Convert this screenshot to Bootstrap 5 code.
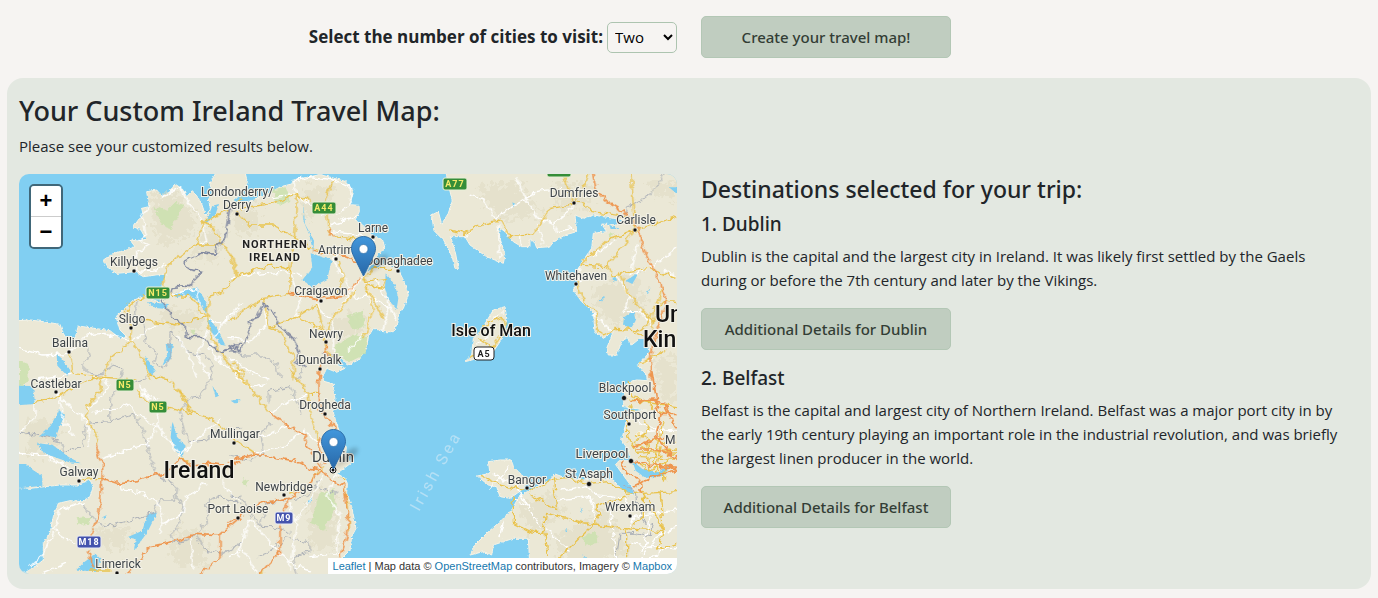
<!DOCTYPE html>
<html lang="en">
<head>
<meta charset="utf-8">
<meta name="viewport" content="width=device-width, initial-scale=1">
<title>Ireland Travel Map</title>
<link href="https://cdn.jsdelivr.net/npm/bootstrap@5.3.0/dist/css/bootstrap.min.css" rel="stylesheet">
<style>
  body { background: #f6f4f2; color: #212529; font-family: "Open Sans", "Noto Sans", sans-serif; font-size: 15px; line-height: 24px; }
  .city-label { font-size: 17px; font-weight: 700; }
  .city-select { width: 70px; height: 31px; padding: 0 3px; border: 1px solid #adc4b0; border-radius: 5px; background: transparent; color: #000; }
  .btn-sage { width: 250px; height: 42px; padding: 0; font-family: "Noto Sans", sans-serif; font-size: 15px; font-weight: 500; color: #333d35; background: #c0cdc0; border: 1px solid #b3c7b5; border-radius: 5px; }
  .btn-sage:hover { background: #b3c7b5; }
  .results { margin: 20px 7px 0; padding: 16px 12px 15px; border-radius: 16px; background: #e3e8e1; }
  .results h1, .results h2, .results h3 { font-family: "Noto Sans", sans-serif; font-weight: 500; }
  .results h1 { margin-bottom: 6px; font-size: 27px; line-height: 34px; }
  .results h2 { font-size: 23px; line-height: 30px; }
  .results h3 { font-size: 19px; line-height: 24px; }
  .travel-map { height: 400px; border-radius: 10px; background: #81cff2; }
  .map-zoom { top: 10px; left: 10px; width: 34px; border: 2px solid rgba(0,0,0,.5); border-radius: 5px; background-clip: padding-box; }
  .map-zoom button { height: 30px; padding: 0; border: 0; background: #fff; color: #000; font: bold 22px/30px "Liberation Sans", sans-serif; }
  .map-zoom button:first-child { height: 31px; border-bottom: 1px solid #ccc; }
  .map-credit { right: 0; bottom: 0; padding: 0 5px; font: 11px/16px "Liberation Sans", sans-serif; color: #333; background: #fff; }
  .map-credit a { color: #1678ae; text-decoration: none; }
  .land { fill: #ebe8d6; stroke: #f6f3e6; stroke-width: 3; }
  .water { fill: #81cff2; }
  .hill { fill: #dddabf; opacity: .45; }
  .wood { fill: #cbe2ae; opacity: .85; }
  .roads path { fill: none; stroke-linejoin: round; stroke-linecap: round; }
  .roads .w { stroke: #fff; stroke-width: 4; }
  .roads .y { stroke: #e9c34d; stroke-width: 4; }
  .roads .o { stroke: #ee9650; stroke-width: 5; }
  .roads .c { stroke: #a9aeb6; stroke-width: 3; }
  .roads .b { stroke: #8289a0; stroke-width: 5; }
  .places { font: 12px Roboto, sans-serif; fill: #3d4348; stroke: #f4f2e8; stroke-width: 2px; paint-order: stroke; text-anchor: middle; }
  .places .town { font-size: 13px; }
  .places .big { font-size: 15px; }
  .places .region { font-size: 11px; font-weight: 700; letter-spacing: 1px; fill: #222; }
  .places .isle { font-size: 16px; font-weight: 500; fill: #111; }
  .places .nation { font-size: 23px; font-weight: 500; fill: #111; }
  .places .from-left { text-anchor: start; }
  .shields { font: 700 9px Roboto, sans-serif; text-anchor: middle; letter-spacing: 1px; }
</style>
</head>
<body>
<form class="row mx-2 my-0 pt-3 align-items-center" style="--bs-gutter-x:24px">
  <div class="col-6 d-flex justify-content-end align-items-center gap-1">
    <label class="city-label" for="cities">Select the number of cities to visit:</label>
    <select class="city-select" id="cities"><option>One</option><option selected>Two</option><option>Three</option></select>
  </div>
  <div class="col-6"><button type="button" class="btn btn-sage">Create your travel map!</button></div>
</form>

<main class="results">
  <h1>Your Custom Ireland Travel Map:</h1>
  <p class="mb-3">Please see your customized results below.</p>
  <div class="row">
    <div class="col-6">
      <div class="travel-map position-relative overflow-hidden">
        <svg class="d-block w-100 h-100" viewBox="0 0 658 400" preserveAspectRatio="xMidYMid slice" role="img" aria-label="Map of Ireland and the Irish Sea">
          <defs>
            <filter id="rough" x="-5%" y="-5%" width="110%" height="110%"><feTurbulence type="fractalNoise" baseFrequency=".12" numOctaves="3" seed="4"/><feDisplacementMap in="SourceGraphic" scale="9" xChannelSelector="R" yChannelSelector="G"/></filter>
            <filter id="wander" x="-5%" y="-5%" width="110%" height="110%"><feTurbulence type="fractalNoise" baseFrequency=".05" numOctaves="2" seed="7" result="n"/><feDisplacementMap in="SourceGraphic" in2="n" scale="24" xChannelSelector="R" yChannelSelector="G"/></filter>
            <filter id="relief" x="0" y="0" width="100%" height="100%"><feTurbulence type="fractalNoise" baseFrequency=".06" numOctaves="3" seed="9" result="n"/><feDisplacementMap in="SourceGraphic" in2="n" scale="90" xChannelSelector="R" yChannelSelector="G"/></filter>
            <filter id="soft" x="-50%" y="-50%" width="200%" height="200%"><feGaussianBlur stdDeviation="2"/></filter>
            <linearGradient id="pinFill" x1="0" y1="0" x2="0" y2="1"><stop offset="0" stop-color="#4197dc"/><stop offset="1" stop-color="#2868a8"/></linearGradient>
            <g id="pin">
              <path d="M12 40 28 21q9-5 9 0-3 8-14 13z" fill="#000" opacity=".2" filter="url(#soft)"/>
              <path d="M12.500.5C5.800.5.5 6 .5 12.600c0 2.900 1 5.200 2.400 8.100L12.500 40l9.600-19.300c1.400-2.900 2.400-5.200 2.400-8.100C24.500 6 19.200.5 12.500.5z" fill="url(#pinFill)" stroke="#2e6ea8"/>
              <circle cx="12.500" cy="13" r="4.500" fill="#fff" stroke="#2f6ea6" stroke-width=".7"/>
            </g>
          </defs>

          <svg width="658" height="400" viewBox="0 0 1974 1200">
            <!-- coastlines -->
            <g filter="url(#rough)">
              <path class="land" d="M-20 441 33 438 73 443 123 451 131 475 142 493 168 493 178 456 213 461 273 470 303 493 325 490 303 468 291 428 318 403 343 378 378 368 423 385 430 330 443 300 410 303 373 308 348 293 293 298 263 278 253 258 283 238 323 228 348 218 333 198 358 201 381 196 366 168 343 158 358 138 373 123 368 103 390 98 383 53 413 48 430 68 453 53 468 30 490 45 503 68 520 50 535 68 548 90 560 125 575 105 568 75 585 60 572 30 600 -20 675 -20 685 25 672 52 640 80 672 92 720 70 752 57 785 38 818 30 823 18 873 8 903 2 943 12 978 22 1003 52 993 92 1020 94 1021 113 1008 138 1028 153 1043 168 1063 188 1090 196 1098 222 1073 243 1060 268 1035 298 1063 285 1103 273 1138 288 1153 318 1168 363 1153 403 1136 425 1138 443 1123 473 1093 473 1063 463 1048 488 1043 523 1018 558 988 573 968 553 920 540 950 572 978 583 953 595 923 583 910 610 915 622 943 630 948 678 938 698 950 740 962 775 982 820 980 845 995 868 968 888 953 898 978 913 985 928 983 958 998 998 1011 1063 998 1088 993 1128 968 1153 960 1220 -20 1220 -20 1200 23 1193 48 1178 73 1158 73 1108 93 1078 103 1028 118 988 153 980 188 983 213 968 223 938 213 918 173 933 123 933 33 943 -20 940z"/>
              <path class="land" d="M1278-20 1290 40 1300 80 1288 118 1268 150 1258 113 1238 123 1245 170 1275 200 1300 250 1308 283 1318 283 1310 240 1297 195 1293 188 1338 188 1353 213 1403 248 1453 268 1458 243 1443 193 1438 158 1458 173 1483 203 1508 218 1533 218 1533 193 1548 208 1553 221 1593 218 1603 203 1638 183 1673 173 1668 123 1693 133 1723 123 1783 133 1818 138 1795 153 1748 150 1763 173 1723 178 1718 223 1693 258 1678 283 1678 318 1663 348 1688 383 1723 413 1728 473 1753 493 1783 473 1763 523 1768 543 1793 543 1808 503 1823 488 1838 513 1863 493 1883 493 1893 533 1858 573 1883 603 1885 620 1853 618 1833 623 1818 638 1813 698 1843 703 1883 708 1838 713 1823 738 1808 798 1828 828 1835 860 1800 860 1790 872 1838 938 1850 965 1813 953 1783 918 1733 913 1693 918 1643 913 1608 900 1593 918 1563 933 1533 948 1500 968 1478 1008 1443 1043 1403 1078 1368 1113 1353 1143 1393 1133 1418 1143 1423 1113 1483 1093 1528 1093 1535 1220 2000 1220 2000-20z"/>
              <path class="land" d="M1408 863 1443 858 1478 858 1483 878 1503 898 1528 928 1508 948 1473 973 1443 968 1433 938 1408 933 1375 906 1413 898z"/>
              <path class="land" d="M1458 398 1423 408 1408 433 1383 473 1363 493 1358 543 1338 563 1378 553 1423 533 1443 503 1458 463 1463 433z"/>
            </g>
            <!-- high ground and woodland -->
            <g filter="url(#relief)">
              <path class="hill" d="M400 60 480 60 540 150 500 190 430 220 400 150zM540 190 600 160 600 260 520 260zM430 400 560 420 540 470 420 450zM640 110 720 90 720 180 650 170zM850 40 950 40 920 120 860 130zM20 740 90 740 130 800 40 850 20 830zM1370 40 1500 20 1560 120 1440 140zM1600 30 1700 20 1720 90 1620 110zM1720 350 1850 290 1880 400 1790 460 1740 410zM1500 1000 1600 950 1640 1010 1540 1080zM1600 1090 1760 1010 1830 1140 1640 1180zM860 960 950 950 950 1120 880 1130zM450 1080 560 1060 560 1180 470 1180zM220 1060 330 1060 320 1130 220 1110zM1880 20 1974 20 1974 80 1900 60zM1900 560 1974 540 1974 680 1930 680zM930 440 1030 410 1030 470 950 500z"/>
            </g>
            <g filter="url(#wander)">
              <path class="wood" d="M405 95 440 110 470 80 495 90 480 120 455 165 430 155zM760 45 800 40 815 80 780 95zM985 425 1030 410 1040 460 1000 470zM950 510 1010 480 1045 490 1040 540 990 565 945 540zM900 960 950 945 945 1010 915 1070 875 1045 890 1000zM0 560 25 570 30 620 0 640zM170 1030 215 1025 210 1050 175 1052zM665 920 690 915 685 935zM1690 1090 1730 1070 1735 1110 1700 1115zM1770 175 1785 180 1775 195zM515 470 535 470 530 485z"/>
            </g>
            <!-- lakes and inlets -->
            <g class="water" filter="url(#rough)">
              <path d="M-20 635 42 636 48 690 -20 695zM-20 870 20 870 45 890 70 905 70 935 -20 945zM120 708 138 725 125 750 110 790 80 785 60 788 95 755zM55 808 100 812 150 850 185 868 150 865 75 838zM113 540 130 555 155 590 145 605 115 575zM467 358 535 340 565 390 562 420 540 385 510 362 470 370zM563 423 595 465 620 515 605 512 575 470zM385 385 450 390 440 405 410 402zM440 510 462 510 455 555 430 575 445 540zM378 545 410 590 395 605 380 575zM460 740 475 790 500 815 490 850 470 830 455 790zM385 1020 415 1015 385 1075 345 1130 350 1095 325 1090 370 1070zM230 1140 245 1155 235 1190 170 1190 195 1165zM580 635 600 665 590 670zM625 770 650 790 630 785zM250 1030 262 1024 255 1038zM875 238 938 258 925 315 880 340 850 318 880 280zM853 90 858 150 885 200 883 235 870 180 853 140zM1100 298 1128 333 1138 373 1133 405 1108 378 1098 343zM635 680 665 675 650 690zM865 990 880 965 875 985zM1695 845 1715 930 1700 880z"/>
              <path d="M1840 860 1870 885 1920 895 1955 870 1935 905 1880 912 1850 890zM1843 410 1850 440 1838 460 1812 455 1815 430zM1820 320 1860 295 1840 330zM1885 355 1895 340 1885 365zM1740 380 1760 365 1748 385zM1780 310 1795 315 1785 325zM1685 1000 1692 1005 1688 1015zM1640 1065 1650 1070 1640 1072zM1690 1140 1705 1155 1695 1150zM1950 40 1974 60 1974 40zM560 150 590 120 600 90 580 95zM1480 85 1490 90 1483 100zM1770 150 1800 165 1775 165z"/>
            </g>

            <g class="roads" filter="url(#wander)">
              <!-- north-west -->
              <g transform="translate(-27 -27)">
                <path class="c" d="M385 410 375 450 400 470 405 530 440 565 430 590 460 610 480 580 480 500 510 530 530 560 580 570 605 600 605 645M230 545 240 570 215 600 240 625 270 630 310 600 335 610 330 645"/>
                <path class="w" d="M455 100 515 65 525 95 575 160 590 230 555 240M415 125 395 150 410 215 385 225 415 240 380 260 380 320 430 315 470 300M27 550 100 570 180 565 230 510 280 505 350 520 365 530M480 390 560 370 570 430 590 460 640 480 690 410M690 430 640 470 600 550 640 600 690 620M365 530 440 480M280 640 200 625 80 645M590 500 560 570 600 640M500 510 540 580 560 640"/>
                <path class="y" d="M690 105 640 140 580 170 560 235 500 280 470 305 460 360 480 390 540 395 590 455 600 510 630 560 670 620 690 625M580 170 600 180 635 230 670 280 685 335 640 380 595 395 592 455M555 240 620 240 640 230M405 395 380 405 350 430 350 460 365 485 360 530 300 580 280 640M365 530 410 600 420 645M400 465 500 480 590 455M180 565 190 625 280 638"/>
                <path class="b" d="M658 130 650 180 645 220 620 245 620 268 575 263 540 280 520 290 535 310 575 320 550 345 540 365 500 362 485 380 455 410 475 440 500 465 525 485 530 515 580 515 600 540 630 558 655 550 690 535M655 545 670 560 680 545 690 555"/>
              </g>
              <!-- Ulster -->
              <g transform="translate(633 -27)">
                <path class="c" d="M0 555 40 570 100 570 140 600 150 640M225 605 210 630 200 645M280 565 310 570"/>
                <path class="w" d="M200 85 190 50 240 35 310 45 365 70 360 120 320 150M200 90 290 150M300 180 385 150M300 200 390 210 430 230M125 95 200 88M180 310 210 400 200 455 290 500M100 400 110 480 60 530 0 520M260 410 280 450 310 460 360 390M400 350 430 400 480 430 460 490M440 350 490 440 500 460M0 580 60 620 120 645M330 240 310 290 340 340M310 460 310 560M350 345 380 400 410 390 430 430 410 500 350 560M215 330 180 320 0 335"/>
                <path class="y" d="M200 88 240 110M200 88 130 115 30 130M20 140 60 180 130 180 200 220 240 250 320 270M200 90 195 200 180 310 180 390M310 50 285 100 295 195 310 215 400 225 420 240M0 270 20 335 0 350M0 465 100 400 180 388M20 335 120 300 180 315M100 400 120 490 150 500 190 570 190 645M120 490 200 455 260 420 280 490 290 560 330 590M375 380 300 470 290 500M400 350 430 310 480 310M400 350 470 340 460 370 410 360M405 360 430 430 410 500 400 515M405 360 440 420 460 460M200 455 280 495M325 290 340 330 325 380M0 590 40 620 40 645"/>
                <path class="o" d="M295 190 310 215M250 260 330 270 380 290M180 385 260 400 350 390 390 340M290 540 290 570M275 600 265 645"/>
                <path class="w" d="M350 390 375 365 395 340 410 335"/>
                <path class="b" d="M0 560 30 560 40 540 60 500 55 470 80 460 100 420 130 440 145 480 190 520 205 560 200 590 225 605"/>
              </g>
              <!-- Galloway, Cumbria and Isle of Man -->
              <g transform="translate(1293 -27)">
                <path class="c" d="M645 27 600 90 550 120 530 125 525 155"/>
                <path class="w" d="M60 90 100 105 135 160M135 160 225 100 200 40M225 100 260 80 330 70M225 100 265 160 310 175 370 125M45 215 70 190M145 180 150 280M210 210 215 240M265 175 275 240M310 175 320 200 370 190M400 290 500 225M390 310 385 345 440 330M430 450 480 495M560 240 540 330 600 310M680 250 600 310M520 440 570 440 610 480M560 600 610 580M640 310 680 340M500 330 540 400 520 440M110 480 160 440M80 540 130 500"/>
                <path class="y" d="M0 195 45 205 100 175 150 165 180 215 250 210 300 130 370 120M370 110 350 60 340 27M380 110 430 140 530 155M545 27 550 130 555 195M375 110 410 50 415 27M560 195 620 175 680 155M555 195 480 220 390 300 470 305 550 200M385 320 380 360 395 400 440 450 440 495 460 510 500 490 570 495 600 470 610 430 650 410M470 305 490 335 530 320 600 310 680 340M515 330 530 380 580 440 610 470 600 520M550 500 590 520M565 600 600 580 640 560M650 405 680 410M635 370 610 470M90 520 130 545 165 500 160 460 120 470 90 500M65 575 130 545"/>
                <path class="o" d="M428 27 440 80 470 110 520 140 565 185 575 240 610 310 650 410 610 530 600 590 605 645"/>
              </g>
              <!-- Connacht -->
              <g transform="translate(-27 588)">
                <path class="c" d="M27 185 100 200 150 215 165 245 215 230 230 160 300 155 370 130 395 170 415 240 435 310 500 350 495 390 450 390 430 430 370 450 280 470 250 450 215 400M300 155 300 90 320 60 400 30 410 20M600 30 570 80 540 85 510 130 525 190 540 215 590 210 610 185 690 175M500 380 520 410 510 460 485 490 490 520 530 510 560 490 595 450 590 400 620 375 690 400M560 490 580 540 640 550 690 520"/>
                <path class="w" d="M140 70 180 110 230 150 240 230M75 90 75 140 27 190M27 250 100 255 170 290 210 325M280 265 350 240 415 220 440 170M250 130 330 115 360 100 380 135 445 170M380 60 440 90 445 170 510 255 590 180 630 150M230 120 300 50 280 20M330 340 340 360 400 370 440 390 460 430 450 490M220 395 150 420 130 480 190 520M130 490 100 550 60 590M460 460 520 430 530 380 590 340M540 500 550 600M390 50 420 90M640 325 640 360 690 390M100 610 170 580M145 70 155 140 190 200"/>
                <path class="y" d="M75 95 140 80 240 30 275 22 380 27M275 25 270 60 230 110 235 160 265 200 255 225M380 60 410 95 550 130 600 145 655 185M510 60 540 120M420 15 480 30 520 80 545 125M300 600 240 600M215 328 275 325M510 262 530 275"/>
                <path class="o" d="M255 225 278 290 270 420 245 495M275 325 320 340 380 332 420 318 465 310 510 265 540 285 600 280 660 290 690 275M235 540 250 590M350 610 380 580 420 530 510 510 560 490 630 495 690 445M575 610 630 560 630 495"/>
              </g>
              <!-- Leinster -->
              <g transform="translate(633 588)">
                <path class="c" d="M115 100 115 65 180 50 200 90 215 130M120 160 90 200 100 250 60 270 0 260M270 330 225 380 160 390 110 400 90 470 30 380 0 375M250 350 275 355 320 370M85 560 130 540 170 500 200 510 240 515 240 545 190 560 200 610M90 470 130 470 180 490"/>
                <path class="w" d="M120 130 180 90 235 75M75 250 160 230 220 180 280 230M0 190 100 200 180 165M200 450 240 390 280 320M60 445 120 520 150 550 200 590 240 600M60 445 20 560M180 400 200 460 180 600M320 310 290 380 330 440 320 540M240 560 330 550M0 560 40 540 80 610M15 10 60 50 110 40"/>
                <path class="y" d="M15 0 50 40 120 130M180 0 235 70 240 130 265 210M240 70 265 70M0 200 75 250M280 290 230 350 180 370M340 340 355 410 355 480M100 605 90 612M325 325 345 325"/>
                <path class="o" d="M265 0 270 120 315 175 310 210M120 130 180 170 225 195 230 230 275 290M0 275 75 252 190 272 240 295 275 300M275 300 305 335 340 345 355 430 350 490 330 560M280 280 265 225 270 200M275 300 230 350 175 385 90 400 40 430 0 458M175 385 150 470 150 545 90 610"/>
              </g>
              <!-- Wales and Lancashire -->
              <g transform="translate(1293 588)">
                <path class="c" d="M520 345 555 360 560 400 580 450 610 465 600 500 550 490 510 490 500 560M560 400 560 420"/>
                <path class="w" d="M190 390 230 405 270 470M330 360 410 350 440 375 520 385 540 400M320 390 420 380 440 440 430 465M240 420 200 350 130 310M530 485 550 440 680 420M540 520 680 540M290 480 360 540M480 420 490 500 500 560M120 355 180 290M150 500 160 450M560 190 680 180M560 150 620 180M600 440 580 540M550 590 620 500 680 470M640 540 600 570"/>
                <path class="y" d="M95 320 150 345 240 365 310 325 350 320 410 340 480 335 530 370 580 365M190 380 190 460 250 490 280 490 290 430 430 465 520 475 640 485M310 320 320 420 240 375M325 565 430 465 450 430 440 410 530 380M285 490 295 560M530 480 530 560M540 110 570 130 600 180 550 220 590 240 680 250M530 130 530 200 560 250 680 240M560 280 600 300 650 280M540 90 680 110M580 370 640 480 620 540 680 520M580 370 680 365M535 35 545 80 610 110M630 365 640 480M600 110 650 130M530 480 580 440 580 370M560 190 600 210 680 220M640 150 610 280 650 330M660 240 640 330M570 260 680 265M590 215 600 300M630 230 620 300"/>
                <path class="o" d="M605 0 620 90 630 130 620 200 680 270M540 95 610 90 640 100 680 170M630 130 680 130M550 230 590 215 640 200M515 275 530 310 570 330 575 370M545 275 600 285 680 295M550 350 610 320 680 300M560 240 620 240 680 260"/>
              </g>
            </g>
          </svg>

          <g class="places">
            <text x="218" y="22">Londonderry/</text><text x="218" y="35">Derry</text>
            <text x="115" y="92">Killybegs</text><text x="113" y="149">Sligo</text><text x="51" y="173">Ballina</text>
            <text x="37" y="214">Castlebar</text><text x="60" y="302">Galway</text><text x="99" y="394">Limerick</text>
            <text x="216" y="264">Mullingar</text><text x="219" y="339">Port Laoise</text><text x="265" y="317">Newbridge</text>
            <text x="306" y="235">Drogheda</text><text x="301" y="190">Dundalk</text><text x="307" y="164">Newry</text>
            <text x="302" y="121">Craigavon</text><text x="317" y="80">Antrim</text><text x="354" y="58">Larne</text><text x="380" y="91">Donaghadee</text>
            <text x="555" y="23">Dumfries</text><text x="617" y="50">Carlisle</text><text x="557" y="106">Whitehaven</text>
            <text x="606" y="218">Blackpool</text><text x="611" y="245">Southport</text><text x="583" y="284" class="town">Liverpool</text>
            <text x="570" y="304">St Asaph</text><text x="508" y="310">Bangor</text><text x="611" y="337">Wrexham</text>
            <text x="314" y="288" class="big">Dublin</text><text x="646" y="270" class="from-left">M</text>
            <text x="256" y="74" class="region">NORTHERN</text><text x="256" y="87" class="region">IRELAND</text>
            <text x="472" y="162" class="isle">Isle of Man</text><text x="180" y="304" class="nation">Ireland</text>
            <text x="636" y="148" class="nation from-left">Un</text><text x="624" y="173" class="nation from-left">Kin</text>
          </g>
          <text transform="translate(400 338) rotate(-61)" font-family="Roboto, sans-serif" font-size="16" letter-spacing="3" fill="#b5e0f5">Irish Sea</text>
          <g fill="#111" stroke="#fff" stroke-width=".5">
            <circle cx="218" cy="40" r="2"/><circle cx="115" cy="97" r="2"/><circle cx="112" cy="154" r="2"/><circle cx="50" cy="178" r="2"/><circle cx="37" cy="218" r="2"/><circle cx="60" cy="307" r="2"/><circle cx="98" cy="399" r="2"/><circle cx="215" cy="269" r="2"/><circle cx="219" cy="344" r="2"/><circle cx="265" cy="321" r="2"/><circle cx="306" cy="240" r="2"/><circle cx="301" cy="195" r="2"/><circle cx="307" cy="168" r="2"/><circle cx="302" cy="127" r="2"/><circle cx="317" cy="85" r="2"/><circle cx="354" cy="63" r="2"/><circle cx="379" cy="97" r="2"/><circle cx="555" cy="29" r="2"/><circle cx="616" cy="56" r="2"/><circle cx="557" cy="110" r="2"/><circle cx="605" cy="224" r="2.500"/><circle cx="610" cy="250" r="2"/><circle cx="612" cy="287" r="2.500"/><circle cx="570" cy="310" r="2.500"/><circle cx="508" cy="314" r="2"/><circle cx="611" cy="342" r="2"/>
          </g>
          <circle cx="314" cy="296" r="3" fill="#fff" stroke="#111"/><circle cx="314" cy="296" r="1.500" fill="#111"/>
          <g class="shields" fill="#f4ea6a">
            <g fill="#358d38" stroke="#e9f0d8"><rect x="127" y="113" width="24" height="12" rx="2"/><rect x="97" y="205" width="18" height="12" rx="2"/><rect x="130" y="227" width="18" height="12" rx="2"/><rect x="293" y="28" width="24" height="12" rx="2"/><rect x="424" y="4" width="24" height="12" rx="2"/><rect x="528" y="-9" width="24" height="12" rx="2"/></g>
            <g fill="#4453ad" stroke="#e9ecf4"><rect x="58" y="362" width="24" height="12" rx="2"/><rect x="256" y="338" width="18" height="12" rx="2"/></g>
            <rect x="455" y="173" width="20" height="13" rx="3" fill="#fff" stroke="#222"/>
            <text x="139" y="122">N15</text><text x="106" y="214">N5</text><text x="139" y="236">N5</text><text x="305" y="37">A44</text><text x="436" y="13">A77</text>
            <text x="70" y="371" fill="#fff">M18</text><text x="265" y="347" fill="#fff">M9</text><text x="465" y="183" fill="#222">A5</text>
          </g>
          <use href="#pin" x="332" y="62"/><use href="#pin" x="302" y="255"/>
        </svg>
        <div class="map-zoom position-absolute d-flex flex-column overflow-hidden">
          <button type="button" aria-label="Zoom in">+</button><button type="button" aria-label="Zoom out">−</button>
        </div>
        <div class="map-credit position-absolute"><a href="#">Leaflet</a> | Map data © <a href="#">OpenStreetMap</a> contributors, Imagery © <a href="#">Mapbox</a></div>
      </div>
    </div>
    <div class="col-6">
      <h2 class="mb-2">Destinations selected for your trip:</h2>
      <h3 class="mb-2">1. Dublin</h3>
      <p class="mb-3 pe-2">Dublin is the capital and the largest city in Ireland. It was likely first settled by the Gaels during or before the 7th century and later by the Vikings.</p>
      <button type="button" class="btn btn-sage d-block mb-3">Additional Details for Dublin</button>
      <h3 class="mb-2">2. Belfast</h3>
      <p class="mb-3 pe-2">Belfast is the capital and largest city of Northern Ireland. Belfast was a major port city in by the early 19th century playing an important role in the industrial revolution, and was briefly the largest linen producer in the world.</p>
      <button type="button" class="btn btn-sage d-block">Additional Details for Belfast</button>
    </div>
  </div>
</main>
<script src="https://cdn.jsdelivr.net/npm/bootstrap@5.3.0/dist/js/bootstrap.bundle.min.js"></script>
</body>
</html>
